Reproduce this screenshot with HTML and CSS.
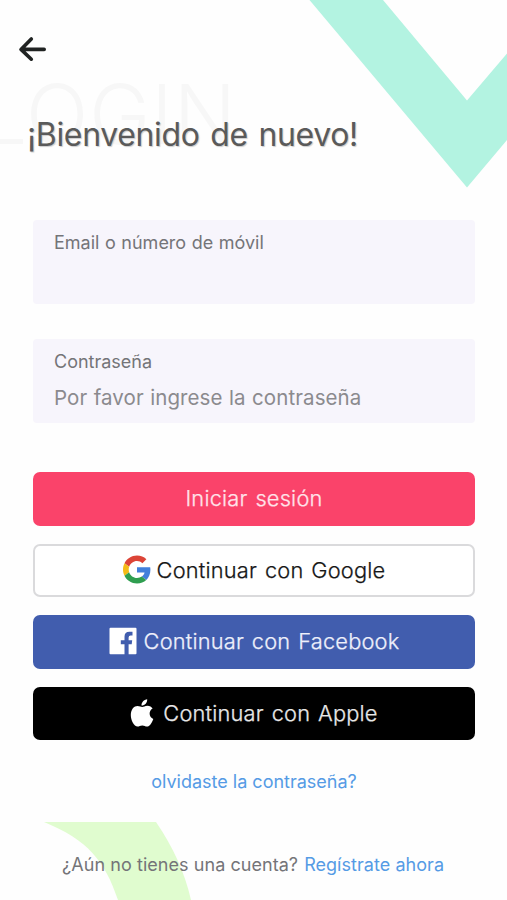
FILE: index.html
```html
<!DOCTYPE html>
<html lang="es">
<head>
<meta charset="utf-8">
<meta name="viewport" content="width=device-width, initial-scale=1">
<title>Iniciar sesión</title>
<link rel="stylesheet" href="styles.css">
</head>
<body>
<main class="screen">
  <svg class="deco" viewBox="0 0 507 900" aria-hidden="true">
    <path fill="#b3f3e1" d="M309.500 0H383L467 100.500L507 53.500V140L467 187.500Z"/>
    <path fill="#e0fccf" d="M44 822H156Q182 860 191 900H118C105 861 88 840 44 822Z"/>
  </svg>
  <span class="watermark" aria-hidden="true">LOGIN</span>
  <header class="topbar">
    <a class="back" href="#" aria-label="Volver">
      <svg viewBox="0 0 28 26" width="28" height="26"><path d="M13.300 3L3 13.400L13.300 23.200M3.500 13.400H26.200" fill="none" stroke="#202322" stroke-width="3.600" stroke-linecap="round" stroke-linejoin="round"/></svg>
    </a>
  </header>
  <h1 class="title">¡Bienvenido de nuevo!</h1>
  <form class="form">
    <div class="field"><label>Email o número de móvil</label></div>
    <div class="field"><label>Contraseña</label><div class="hint">Por favor ingrese la contraseña</div></div>
  </form>
  <div class="actions">
    <button class="btn primary"><span>Iniciar sesión</span></button>
    <button class="btn google">
      <svg viewBox="0 0 48 48" width="28" height="29"><path fill="#dc4437" d="M24 9.500c3.540 0 6.710 1.220 9.210 3.600l6.850-6.850C35.900 2.380 30.470 0 24 0 14.620 0 6.510 5.380 2.560 13.220l7.980 6.190C12.430 13.720 17.740 9.500 24 9.500z"/><path fill="#427fdb" d="M46.980 24.550c0-1.570-.15-3.090-.38-4.550H24v9.020h12.940c-.58 2.960-2.260 5.480-4.780 7.180l7.730 6c4.510-4.180 7.090-10.360 7.090-17.650z"/><path fill="#f4bb16" d="M10.530 28.590c-.48-1.450-.76-2.990-.76-4.590s.27-3.140.76-4.590l-7.980-6.190C.92 16.460 0 20.120 0 24c0 3.880.92 7.540 2.560 10.780l7.970-6.190z"/><path fill="#2f9e50" d="M24 48c6.480 0 11.930-2.130 15.890-5.810l-7.730-6c-2.150 1.450-4.920 2.300-8.160 2.300-6.260 0-11.570-4.220-13.470-9.910l-7.980 6.190C6.510 42.620 14.620 48 24 48z"/></svg>
      <span>Continuar con Google</span>
    </button>
    <button class="btn facebook">
      <svg viewBox="0 0 28 28" width="28" height="28"><path fill="#fff" d="M1.500.8H26.500Q27.500.8 27.500 1.800V26.200Q27.500 27.200 26.500 27.200H19.600V17.200H22.700L23.200 13.200H19.600V10.500Q19.600 8.500 21.600 8.500H23.500V4.700H20.400Q15.500 4.700 15.500 9.700V13.200H11.800V17.200H15.500V27.200H1.500Q.5 27.200.5 26.200V1.800Q.5.8 1.500.8Z"/></svg>
      <span>Continuar con Facebook</span>
    </button>
    <button class="btn apple">
      <svg viewBox="0 0 24 28" width="24" height="28"><path fill="#fff" d="M17.200.2C17.400 3.700 14.800 6.600 11.500 6.500C11.400 3.300 14 .5 17.200.2ZM12.200 8C13.600 8 14.900 6.700 17.400 6.700C19.700 6.700 21.600 7.900 22.600 9.500C18.200 12.100 18.900 18.200 23.300 19.900C22.500 22.500 20 27.600 17 27.600C15.200 27.600 14.500 26.500 12.300 26.500C10.100 26.500 9.300 27.600 7.600 27.600C4 27.600.8 21.200.8 16.100C.8 10.300 4.100 7 7.500 7C9.500 7 11 8 12.200 8Z"/></svg>
      <span>Continuar con Apple</span>
    </button>
  </div>
  <a class="forgot" href="#">olvidaste la contraseña?</a>
  <p class="signup"><span>¿Aún no tienes una cuenta?</span><a href="#">Regístrate ahora</a></p>
</main>
</body>
</html>
```
FILE: styles.css
```css
* { box-sizing: border-box; }
body { margin: 0; background: #fefefe; font-family: Inter, "Liberation Sans", sans-serif; color: #747478; }
a { color: #559be5; text-decoration: none; }
span, label, .hint, .signup a { white-space: nowrap; }
.screen { position: relative; width: 507px; height: 900px; overflow: hidden; padding: 0 32px 0 33px; }
.screen > * { position: relative; }
.screen > .deco { position: absolute; left: 0; top: 0; width: 507px; height: 900px; }
.screen > .watermark { position: absolute; left: -19px; top: 69px; font-size: 82px; line-height: 92px; font-weight: 300; color: #f7f7f7; letter-spacing: 1px; }
.topbar { height: 112px; padding-top: 36px; margin-left: -15px; }
.back { display: block; width: 28px; height: 26px; }
.title { margin: 0 0 0 -6px; height: 108px; font-size: 32px; line-height: 46px; font-weight: 400; letter-spacing: -.35px; word-spacing: 2px; color: #5a5a5a; text-shadow: 1px 1px 1px #ccc; }
.form { display: grid; gap: 35px; }
.field { height: 84px; padding: 11px 21px; border-radius: 4px; background: #f7f5fc; font-size: 18px; line-height: 24px; word-spacing: .5px; }
.field label { display: block; }
.hint { margin-top: 11px; font-size: 20.500px; line-height: 26px; letter-spacing: .1px; word-spacing: .5px; color: #8b8a8e; }
.actions { display: grid; gap: 18px; margin-top: 49px; }
.btn { display: flex; align-items: center; justify-content: center; height: 53.500px; padding: 0 0 1px; border: 0; border-radius: 7px; font: 300 21.800px/28px Inter, "Liberation Sans", sans-serif; letter-spacing: .2px; word-spacing: 1.500px; color: #eef0fb; -webkit-text-stroke: .25px currentColor; }
.btn svg { flex: none; }
.primary { background: #fa436a; color: #ffe4ea; }
.google { background: #fff; border: 2px solid #dadadc; color: #161616; gap: 6px; }
.facebook { background: #415dae; gap: 7px; }
.apple { background: #000; color: #e8e8e8; gap: 9px; }
.forgot { display: block; margin-top: 30px; text-align: center; font-size: 18px; line-height: 24px; }
.signup { display: flex; gap: 6px; margin: 59px 0 0 29px; font-size: 18px; line-height: 24px; letter-spacing: .04px; word-spacing: .1px; }
```
